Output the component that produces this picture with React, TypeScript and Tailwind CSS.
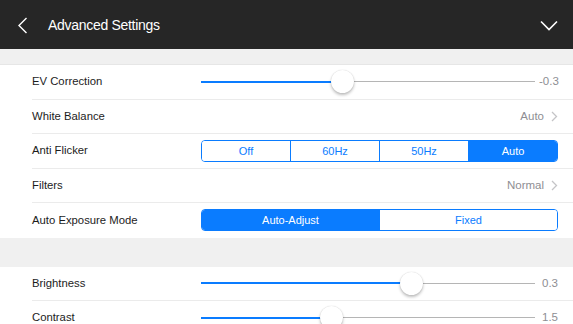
import React from "react";

const font = { fontFamily: '"Liberation Sans", Arial, sans-serif' };

function Chevron() {
  return (
    <svg width="7" height="11" viewBox="0 0 7 11" className="ml-[7px]">
      <path d="M1 1 L5.5 5.5 L1 10" fill="none" stroke="#c4c4c7" strokeWidth="1.3" />
    </svg>
  );
}

function Slider({ pct, value }: { pct: number; value: string }) {
  return (
    <div className="flex items-center w-[357px]">
      <div className="relative flex-1 h-[22px] flex items-center">
        <div className="absolute left-0 right-0 h-[1px] bg-[#b5b5b5]" />
        <div className="absolute left-0 h-[2px] bg-[#0a7cff]" style={{ width: `${pct}%` }} />
        <div
          className="absolute w-[23px] h-[23px] rounded-full bg-white shadow-[0_2px_3px_rgba(0,0,0,0.25),0_0_1px_rgba(0,0,0,0.2)]"
          style={{ left: `calc(${pct}% - 11.5px)` }}
        />
      </div>
      <span className="w-[23px] text-right text-[11.5px] text-[#8e8e93] pl-[4px]">{value}</span>
    </div>
  );
}

function Segmented({ items, active }: { items: string[]; active: number }) {
  return (
    <div className="flex w-[357px] h-[22px] border border-[#0a7cff] rounded-[4px] overflow-hidden">
      {items.map((it, i) => (
        <div
          key={it}
          className={
            "flex-1 flex items-center justify-center text-[11px] " +
            (i === active ? "bg-[#0a7cff] text-white" : "text-[#0a7cff] bg-white") +
            (i > 0 ? " border-l border-[#0a7cff]" : "")
          }
        >
          {it}
        </div>
      ))}
    </div>
  );
}

function Row({ label, children, last }: { label: string; children: React.ReactNode; last?: boolean }) {
  return (
    <div className="pl-[32px] bg-white">
      <div
        className={
          "flex items-center justify-between h-[34.5px] pr-[15px] " +
          (last ? "" : "border-b border-[#ebebeb]")
        }
      >
        <span className="text-[11.3px] text-[#1c1c1c]">{label}</span>
        {children}
      </div>
    </div>
  );
}

function Link({ value }: { value: string }) {
  return (
    <div className="flex items-center text-[11.5px] text-[#8e8e93]">
      {value}
      <Chevron />
    </div>
  );
}

export default function App() {
  return (
    <div className="w-[573px] h-[324px] overflow-hidden bg-[#f0f0f0]" style={font}>
      <div className="h-[49px] bg-[#262626] flex items-center justify-between pl-[17px] pr-[15px] pt-[2px]">
        <div className="flex items-center">
          <svg width="11" height="17" viewBox="0 0 11 17">
            <path d="M9.5 1 L2 8.5 L9.5 16" fill="none" stroke="white" strokeWidth="1.4" />
          </svg>
          <span className="ml-[20px] text-white text-[14px] tracking-[-0.3px]">Advanced Settings</span>
        </div>
        <svg width="18" height="11" viewBox="0 0 18 11">
          <path d="M1 1.5 L9 9.5 L17 1.5" fill="none" stroke="white" strokeWidth="1.6" />
        </svg>
      </div>
      <div className="h-[16px] border-b border-[#e6e6e6]" />
      <Row label="EV Correction">
        <Slider pct={42.5} value="-0.3" />
      </Row>
      <Row label="White Balance">
        <Link value="Auto" />
      </Row>
      <Row label="Anti Flicker">
        <Segmented items={["Off", "60Hz", "50Hz", "Auto"]} active={3} />
      </Row>
      <Row label="Filters">
        <Link value="Normal" />
      </Row>
      <Row label="Auto Exposure Mode" last>
        <Segmented items={["Auto-Adjust", "Fixed"]} active={0} />
      </Row>
      <div className="h-[29px] bg-[#f0f0f0]" />
      <Row label="Brightness">
        <Slider pct={63} value="0.3" />
      </Row>
      <Row label="Contrast">
        <Slider pct={39} value="1.5" />
      </Row>
    </div>
  );
}
